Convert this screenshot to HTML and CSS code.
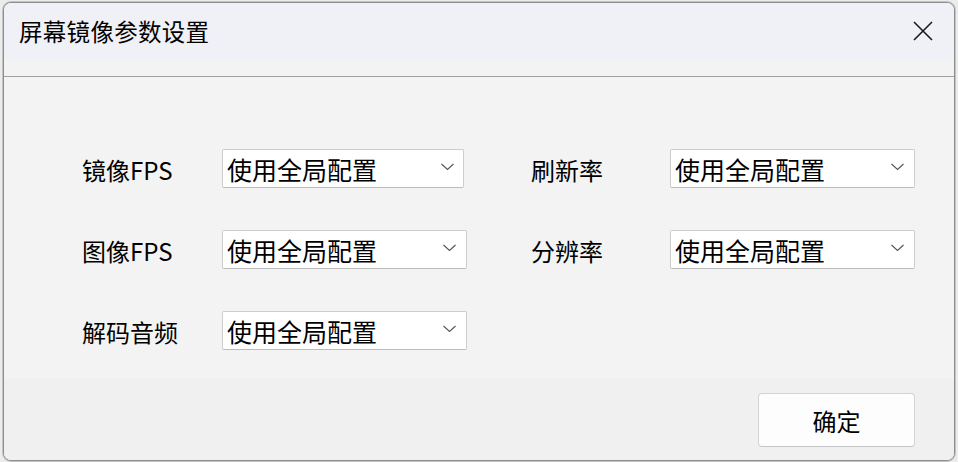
FILE: index.html
```html
<!DOCTYPE html>
<html lang="zh-CN">
<head>
<meta charset="utf-8">
<title>屏幕镜像参数设置</title>
<link rel="stylesheet" href="styles.css">
</head>
<body>
<div class="window">
  <div class="titlebar">
    <span class="title">屏幕镜像参数设置</span>
    <span class="close">
      <svg width="20" height="20" viewBox="0 0 20 20"><path d="M1 1 L19 19 M19 1 L1 19" stroke="#1a1a1a" stroke-width="1.6" fill="none"/></svg>
    </span>
  </div>
  <div class="spacer"></div>
  <div class="content">
    <div class="grid">
      <div class="label">镜像FPS</div>
      <div class="cell"><div class="select w242"><span>使用全局配置</span><svg class="chev" width="13" height="8" viewBox="0 0 13 8"><path d="M0.5 1 L6.5 6.5 L12.5 1" stroke="#555" stroke-width="1.1" fill="none"/></svg></div></div>
      <div class="label">刷新率</div>
      <div class="cell"><div class="select"><span>使用全局配置</span><svg class="chev" width="13" height="8" viewBox="0 0 13 8"><path d="M0.5 1 L6.5 6.5 L12.5 1" stroke="#555" stroke-width="1.1" fill="none"/></svg></div></div>

      <div class="label">图像FPS</div>
      <div class="cell"><div class="select"><span>使用全局配置</span><svg class="chev" width="13" height="8" viewBox="0 0 13 8"><path d="M0.5 1 L6.5 6.5 L12.5 1" stroke="#555" stroke-width="1.1" fill="none"/></svg></div></div>
      <div class="label">分辨率</div>
      <div class="cell"><div class="select"><span>使用全局配置</span><svg class="chev" width="13" height="8" viewBox="0 0 13 8"><path d="M0.5 1 L6.5 6.5 L12.5 1" stroke="#555" stroke-width="1.1" fill="none"/></svg></div></div>

      <div class="label">解码音频</div>
      <div class="cell"><div class="select"><span>使用全局配置</span><svg class="chev" width="13" height="8" viewBox="0 0 13 8"><path d="M0.5 1 L6.5 6.5 L12.5 1" stroke="#555" stroke-width="1.1" fill="none"/></svg></div></div>
    </div>
  </div>
  <div class="footer">
    <button class="btn">确定</button>
  </div>
</div>
</body>
</html>
```

FILE: styles.css
```css
html, body {
  margin: 0;
  padding: 0;
  height: 462px;
  overflow: hidden;
}
body {
  background: #ececec;
  font-family: "Noto Sans CJK SC", "Noto Sans", sans-serif;
  color: #000;
  padding: 2px 3px 0 3px;
  box-sizing: border-box;
}
.window {
  width: 952px;
  height: 459px;
  box-sizing: border-box;
  border: 1px solid #8e8e8e;
  box-shadow: 0 0 0 1px #c4c4c4;
  border-radius: 8px;
  overflow: hidden;
  background: #f3f3f3;
  display: flex;
  flex-direction: column;
}
.titlebar {
  height: 57px;
  flex: none;
  background: #eff1f6;
  display: flex;
  align-items: center;
  justify-content: space-between;
  padding: 0 21px 0 15px;
}
.title {
  font-size: 23.5px;
  line-height: 1;
  letter-spacing: 0.3px;
}
.close {
  display: flex;
  align-items: center;
  margin-top: -1px;
}
.spacer {
  height: 16px;
  flex: none;
  background: #f3f3f3;
  border-bottom: 1px solid #a2a2a2;
}
.content {
  height: 302px;
  flex: none;
  box-sizing: border-box;
  padding: 72px 0 0 78px;
}
.grid {
  display: grid;
  grid-template-columns: 140px 309px 139px 245px;
  grid-auto-rows: 39px;
  row-gap: 42px;
}
.label {
  display: flex;
  align-items: center;
  font-size: 24px;
  padding-top: 2px;
}
.cell {
  display: flex;
}
.select {
  width: 245px;
  height: 39px;
  box-sizing: border-box;
  background: #ffffff;
  border: 1px solid #cdcdcd;
  border-bottom-color: #bcbcbc;
  border-radius: 2px;
  display: flex;
  align-items: center;
  justify-content: space-between;
  padding: 1px 10px 0 4px;
  font-size: 25px;
}
.select.w242 {
  width: 242px;
  padding-right: 9px;
}
.select span {
  line-height: 1;
}
.chev {
  display: block;
  margin-top: -4px;
}
.footer {
  flex: 1;
  background: #f0f0f0;
  display: flex;
  justify-content: flex-end;
  align-items: flex-start;
  padding: 14px 39px 0 0;
}
.btn {
  width: 157px;
  height: 54px;
  box-sizing: border-box;
  background: #fdfdfd;
  border: 1px solid #d3d3d3;
  border-bottom-color: #c6c6c6;
  border-radius: 4px;
  font-family: "Noto Sans CJK SC", "Noto Sans", sans-serif;
  font-size: 24px;
  color: #000;
  padding: 0;
}
```
